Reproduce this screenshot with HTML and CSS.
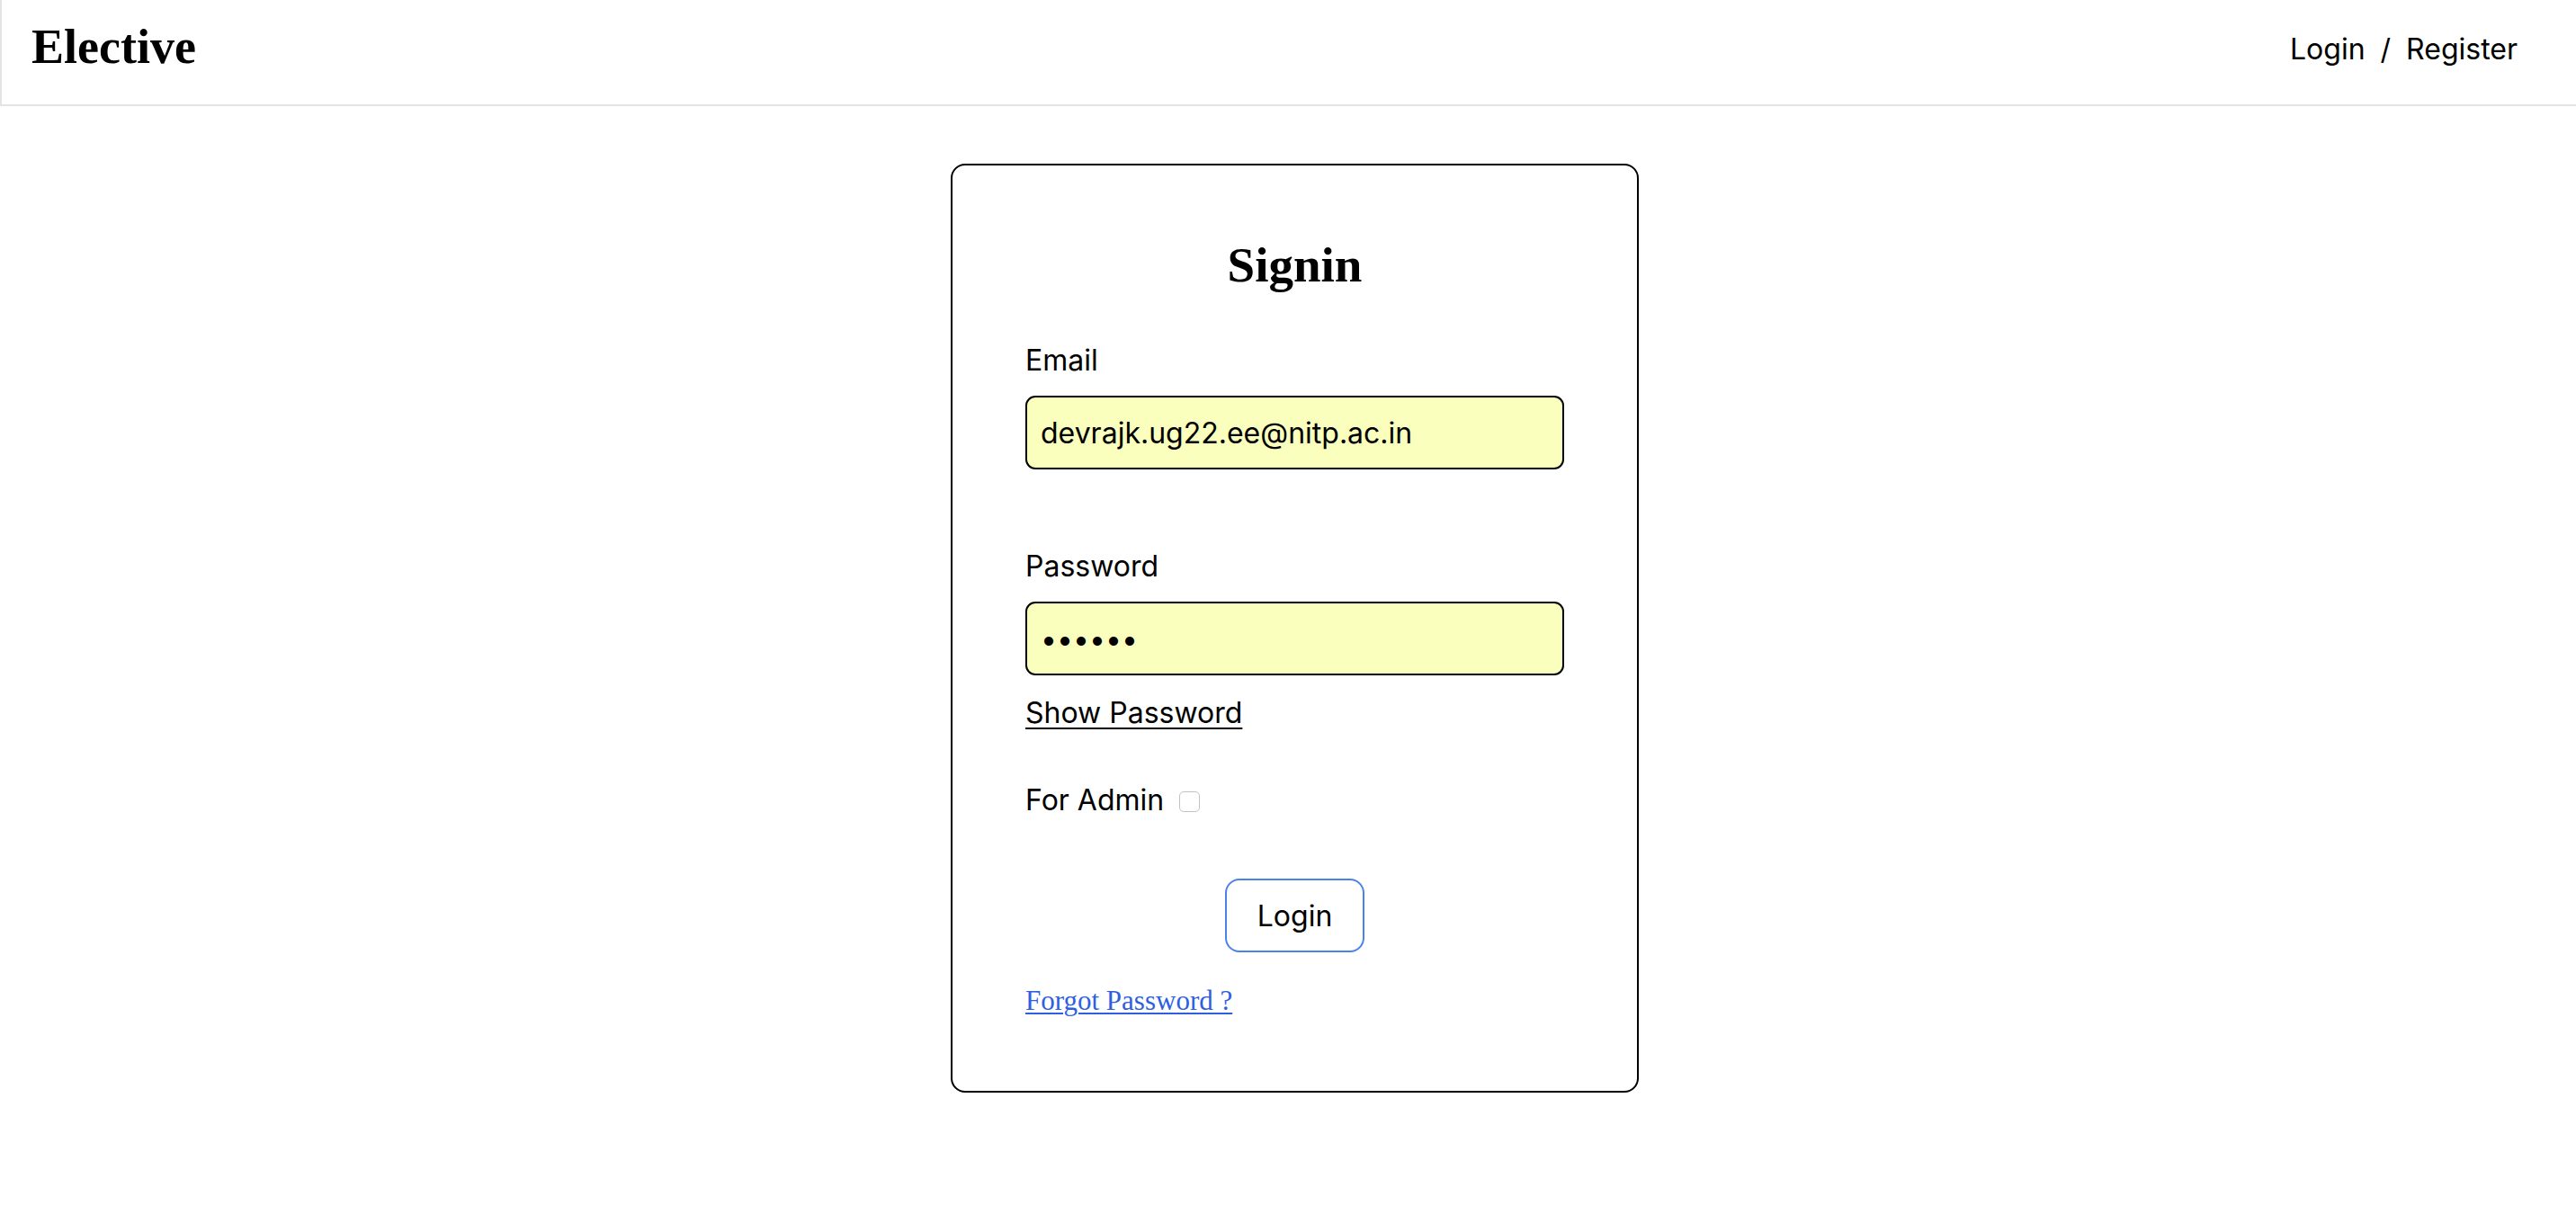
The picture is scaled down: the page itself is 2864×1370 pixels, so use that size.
FILE: index.html
```html
<!DOCTYPE html>
<html lang="en">
<head>
<meta charset="utf-8">
<title>Elective - Signin</title>
<link rel="stylesheet" href="styles.css">
</head>
<body>
<header class="topbar">
  <a class="brand" href="#">Elective</a>
  <nav class="auth-nav">
    <a class="nav-link" href="#">Login</a>
    <span class="nav-sep">/</span>
    <a class="nav-link" href="#">Register</a>
  </nav>
</header>
<main class="page">
  <section class="card">
    <h1 class="card-title">Signin</h1>
    <form class="form">
      <label class="field-label email-label" for="email">Email</label>
      <input class="field-input" id="email" type="email" value="devrajk.ug22.ee@nitp.ac.in">
      <label class="field-label password-label" for="password">Password</label>
      <input class="field-input" id="password" type="password" value="123456">
      <a class="show-link" href="#">Show Password</a>
      <label class="admin-row">For Admin <input class="admin-check" type="checkbox"></label>
      <div class="actions"><button class="login-btn" type="button">Login</button></div>
      <a class="forgot-link" href="#">Forgot Password ?</a>
    </form>
  </section>
</main>
</body>
</html>
```
FILE: styles.css
```css
* { box-sizing: border-box; }
html, body { margin: 0; padding: 0; background: #fff; }
body {
  font-family: Inter, "Noto Sans", sans-serif;
  color: #000;
}
.topbar {
  height: 118px;
  display: flex;
  align-items: center;
  justify-content: space-between;
  padding: 0 65px 7px 33px;
  border-left: 2px solid #e4e4e7;
  border-bottom: 2px solid #e4e4e7;
}
.brand {
  font-family: "Liberation Serif", "Times New Roman", serif;
  font-weight: 700;
  font-size: 54px;
  line-height: 61px;
  color: #000;
  text-decoration: none;
  position: relative;
  top: -2px;
}
.auth-nav {
  display: flex;
  align-items: center;
  font-size: 32px;
  line-height: 39px;
}
.nav-link { color: #000; text-decoration: none; }
.nav-sep { margin: 0 17px; }
.page {
  display: flex;
  justify-content: center;
  padding: 64px 0 0 15px;
}
.card {
  width: 765px;
  border: 2px solid #000;
  border-radius: 16px;
  padding: 80px 81px 83px;
}
.card-title {
  margin: 0;
  text-align: center;
  font-family: "Liberation Serif", "Times New Roman", serif;
  font-weight: 700;
  font-size: 55px;
  line-height: 61px;
}
.form {
  display: flex;
  flex-direction: column;
  align-items: flex-start;
}
.field-label {
  font-size: 32px;
  line-height: 39px;
}
.email-label { margin-top: 56px; }
.password-label { margin-top: 88px; }
.field-input {
  margin-top: 20px;
  width: 100%;
  height: 82px;
  border: 2px solid #000;
  border-radius: 11px;
  background: #faffbd;
  padding: 0 15px;
  font-family: Inter, "Noto Sans", sans-serif;
  font-size: 32px;
  color: #000;
  outline: none;
}
.show-link {
  margin-top: 22px;
  font-size: 32px;
  line-height: 39px;
  color: #000;
  text-decoration: underline;
  text-underline-offset: 5px;
  text-decoration-thickness: 2px;
}
.admin-row {
  margin-top: 58px;
  display: flex;
  align-items: center;
  font-size: 32px;
  line-height: 39px;
}
.admin-check {
  appearance: none;
  -webkit-appearance: none;
  width: 23px;
  height: 23px;
  margin: 3px 0 0 17px;
  border: 1.5px solid #c2c2c8;
  border-radius: 5px;
  background: #fff;
}
.actions {
  margin-top: 68px;
  width: 100%;
  display: flex;
  justify-content: center;
}
.login-btn {
  height: 82px;
  padding: 0 34px;
  border: 2px solid #4b82ea;
  border-radius: 16px;
  background: #fff;
  font-family: Inter, "Noto Sans", sans-serif;
  font-size: 32px;
  color: #000;
}
.forgot-link {
  margin-top: 36px;
  font-family: "Liberation Serif", "Times New Roman", serif;
  font-size: 31px;
  line-height: 35px;
  color: #2f5fe0;
  text-decoration: underline;
  text-decoration-thickness: 2px;
  text-underline-offset: 3px;
}
```
